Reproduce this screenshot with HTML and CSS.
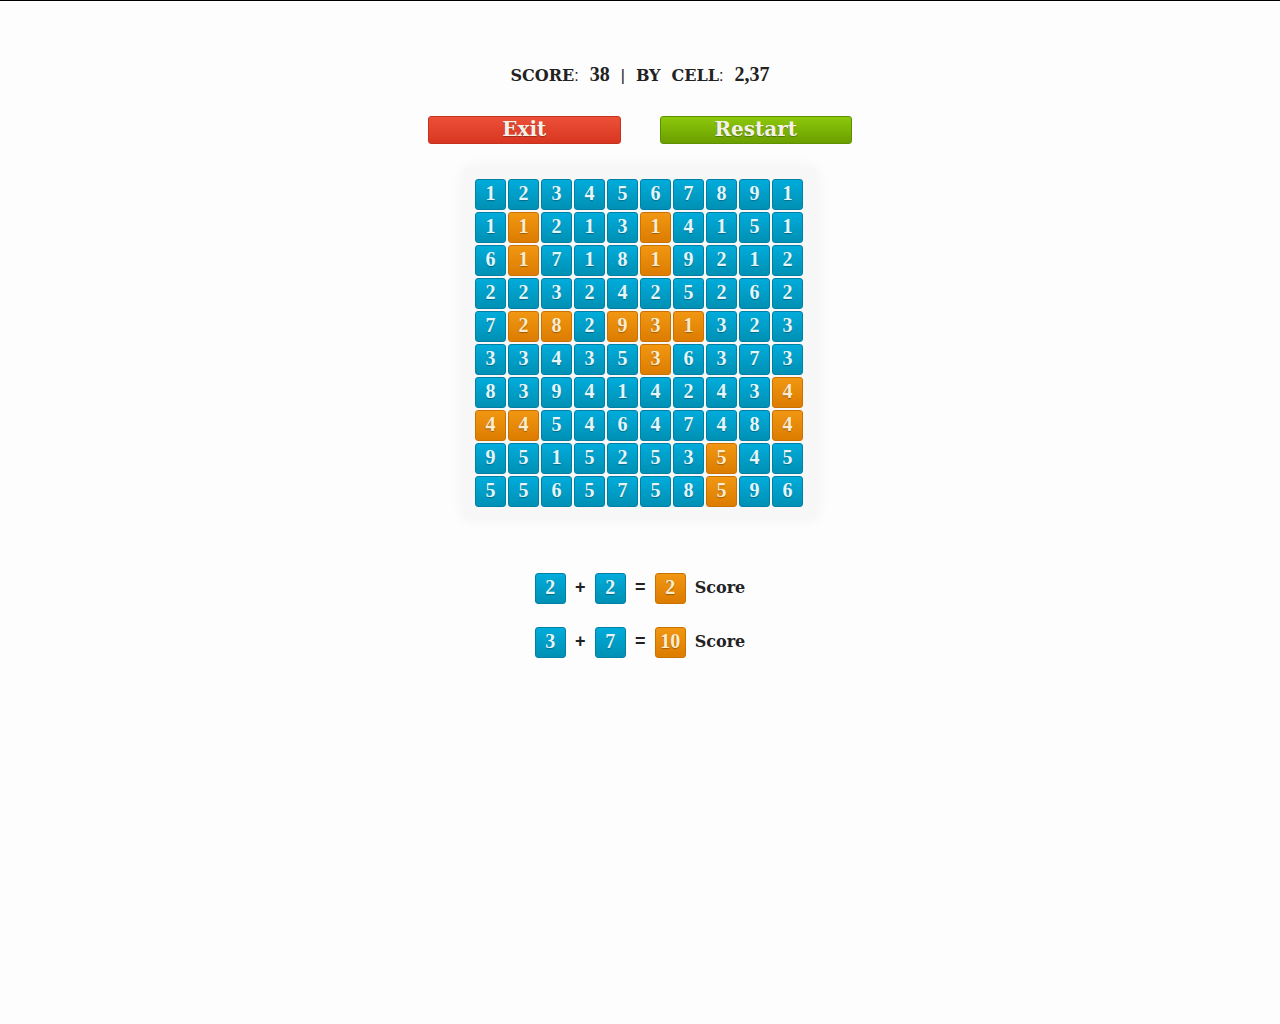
FILE: index.html
```html
<!DOCTYPE html>
<html lang="en">
<head>
    <meta charset="UTF-8">
    <title>Numbers</title>
    <link rel="stylesheet" href="styles.css">
</head>
<body>
<div class="game">
    <div class="status">
        <span>SCORE<i>:</i></span>
        <span class="num">38</span>
        <i>|</i>
        <span>BY</span>
        <span>CELL<i>:</i></span>
        <span class="num">2,37</span>
    </div>

    <div class="controls">
        <button type="button" class="btn red">Exit</button>
        <button type="button" class="btn green">Restart</button>
    </div>

    <div class="board" id="board"></div>

    <div class="rules">
        <div class="rule">
            <span class="cell">2</span><b>+</b><span class="cell">2</span><b>=</b><span class="cell orange">2</span>
            <span class="label">Score</span>
        </div>
        <div class="rule">
            <span class="cell">3</span><b>+</b><span class="cell">7</span><b>=</b><span class="cell orange">10</span>
            <span class="label">Score</span>
        </div>
    </div>
</div>

<script src="game.js"></script>
</body>
</html>
```

FILE: game.js
```js
var rows = [
    "1234567891",
    "1121314151",
    "6171819212",
    "2232425262",
    "7282931323",
    "3343536373",
    "8394142434",
    "4454647484",
    "9515253545",
    "5565758596"
];

// removed cells, one list of columns for each row
var used = [[], [1, 5], [1, 5], [], [1, 2, 4, 5, 6], [5], [9], [0, 1, 9], [7], [7]];

var board = document.getElementById("board");
for (var i = 0; i < rows.length; i++) {
    for (var j = 0; j < rows[i].length; j++) {
        var cell = document.createElement("button");
        cell.type = "button";
        cell.className = used[i].indexOf(j) > -1 ? "cell orange" : "cell";
        cell.textContent = rows[i].charAt(j);
        board.appendChild(cell);
    }
}
```

FILE: styles.css
```css
* {
    box-sizing: border-box;
}

body {
    margin: 0;
    border-top: 1px solid #000;
    background: #fdfdfd;
    color: #222;
    font-family: "DejaVu Serif", serif;
    font-size: 16px;
    font-weight: bold;
}

.game {
    display: flex;
    flex-direction: column;
    align-items: center;
    padding: 63px 16px;
}

.status {
    display: flex;
    align-items: baseline;
    gap: 11px;
    height: 20px;
    line-height: 20px;
}

.status i {
    font-family: "Liberation Sans", sans-serif;
    font-style: normal;
    font-weight: normal;
}

.status .num {
    font-family: "Liberation Serif", serif;
    font-size: 20px;
}

.controls {
    display: flex;
    gap: 39px;
    width: 100%;
    max-width: 424px;
    margin: 32px 0 23px;
}

.btn {
    flex: 1;
    height: 28px;
    padding: 0 0 2px;
    border: 1px solid;
    border-radius: 3px;
    color: #f5f1e8;
    font: bold 20px/24px "DejaVu Serif", serif;
    text-shadow: 0 1px 1px rgba(0, 0, 0, .3);
    cursor: pointer;
}

.red {
    border-color: #c5321f;
    background: linear-gradient(#ec5037, #d93622);
}

.green {
    border-color: #5c9200;
    background: linear-gradient(#8cc80a, #6b9f00);
}

.board {
    display: grid;
    grid-template-columns: repeat(10, 31px);
    gap: 2px;
    padding: 12px 14px 12px 12px;
    border-radius: 4px;
    background: #f7f7f7;
    box-shadow: 0 0 14px rgba(0, 0, 0, .05);
}

.cell {
    display: block;
    width: 31px;
    height: 31px;
    padding: 0 0 3px;
    border: 1px solid #0080a5;
    border-radius: 3px;
    background: linear-gradient(#00acdb, #0090b4);
    color: #e2f6fb;
    font: bold 20px/26px "Liberation Serif", serif;
    text-align: center;
    text-shadow: 0 1px 1px rgba(0, 0, 0, .3);
}

.board .cell {
    cursor: pointer;
}

.orange {
    border-color: #ca7200;
    background: linear-gradient(#f19712, #dc7c00);
    color: #fdebd0;
}

.rules {
    display: grid;
    gap: 23px;
    margin-top: 54px;
}

.rule {
    display: flex;
    align-items: center;
}

.rule b {
    width: 29px;
    font: bold 18px/24px "Liberation Sans", sans-serif;
    text-align: center;
}

.rule b,
.rule .label {
    padding-bottom: 3px;
}

.rule .label {
    margin-left: 9px;
}
```
